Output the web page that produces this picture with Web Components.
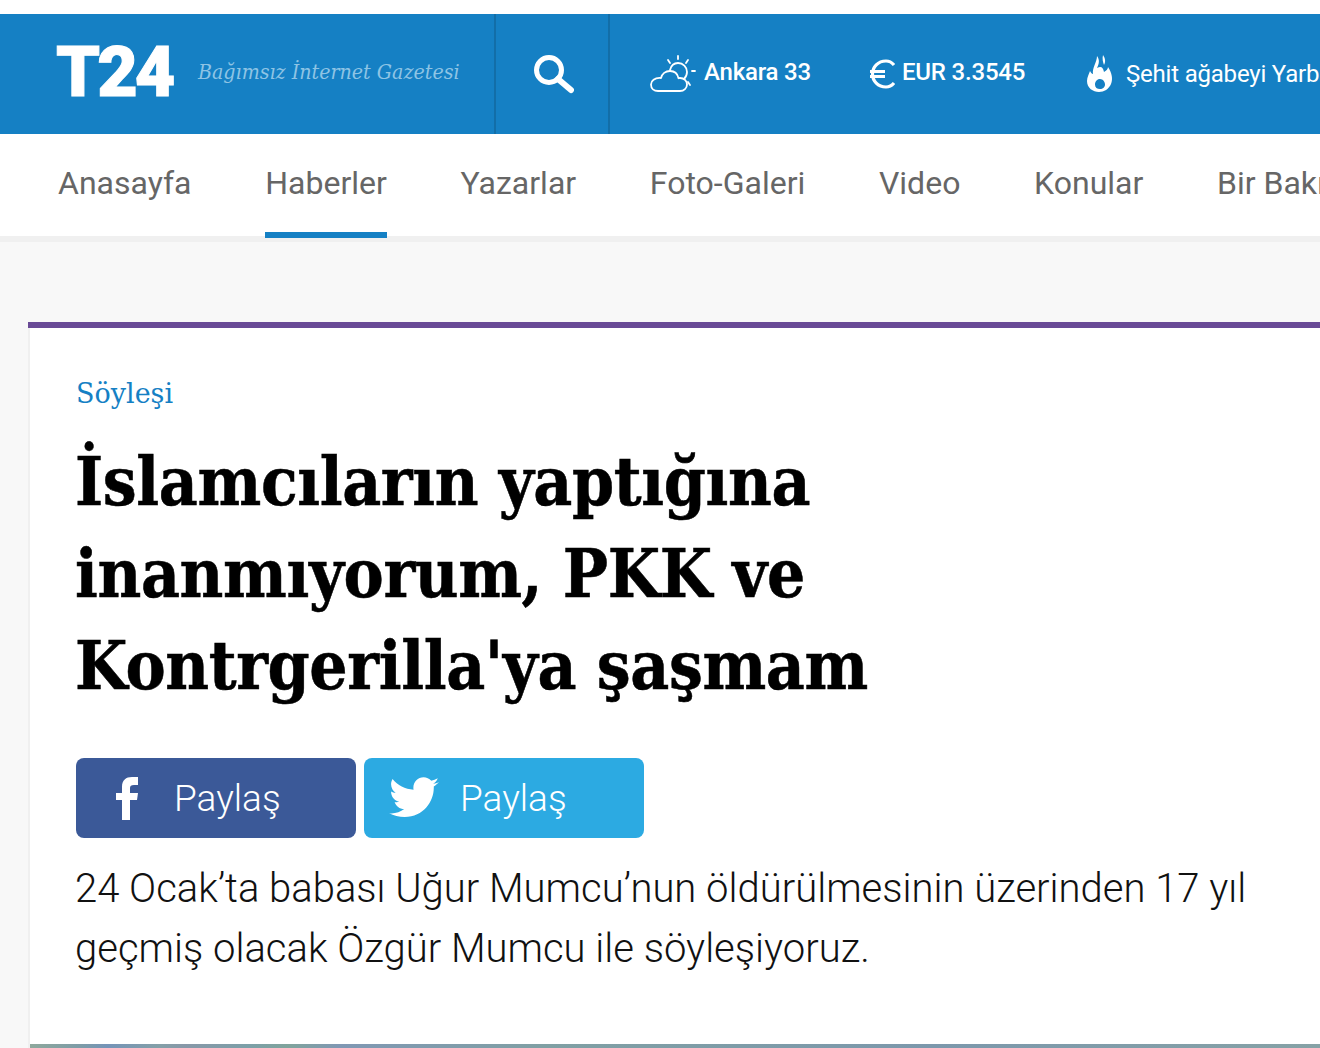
<!DOCTYPE html>
<html lang="tr">
<head>
<meta charset="utf-8">
<title>T24</title>
<style>
    html, body { margin: 0; padding: 0; height: 1048px; overflow: hidden; background: #f8f8f8; font-family: Roboto, sans-serif; }
</style>
</head>
<body>
<t24-header>
    <t24-ticker slot="tickers" style="margin-left:39px;width:220px;--label-pad:4px">
        <svg slot="icon" width="48" height="40" viewBox="0 0 48 40" fill="none" stroke="#fff" stroke-width="1.8" stroke-linecap="round" stroke-linejoin="round" style="margin-right:7px">
            <path d="M9 37h22c4 0 7-3 7-6.500s-3-6.500-7-6.500c-.6 0-1 0-1.500.2C28.500 19.500 25 17 21 17c-4.500 0-8 3-9 7-.5-.1-1-.1-1.500-.1C6 23.900 2 26.500 2 30.500S5 37 9 37z"/>
            <path d="M21 16c1-4 4-7 8-7 5 0 9 4 9 9 0 3-1 5-3 7"/>
            <path d="M29 2v3M19 6l2 3M39 6l-2 3M43 17h3M39 28l2 3"/>
        </svg>
        Ankara 33
    </t24-ticker>
    <t24-ticker slot="tickers" style="width:216px;--label-pad:4px">
        <svg slot="icon" width="26" height="30" viewBox="0 0 26 30" fill="none" stroke="#fff" stroke-width="3.200" style="margin-right:7px">
            <path d="M25 6C22.500 3 20 2 17 2 9 2 3.500 8 3.500 15S9 28 17 28c3 0 5.500-1 8-4"/>
            <path d="M1 12.500h15M1 17.500h15"/>
        </svg>
        EUR 3.3545
    </t24-ticker>
    <t24-ticker slot="tickers" style="white-space:nowrap;font-weight:400">
        <svg slot="icon" width="30" height="42" viewBox="0 0 30 42" style="margin-right:11px">
            <path fill="#fff" fill-rule="evenodd" d="M12 3c3 4 2 8 0 12 4-2 6-1 7 4 2-1 4-3 4-5 4 6 5 12 3 17-2 5-7 8-12 8-6 0-12-4-12-11 0-4 2-7 3-10 1 2 2 3 3 3-1-6 4-12 4-18zM15 26c-3 0-5 2.500-5 5.500s2 4.500 5 4.500 5-2 5-4.500-2-5.500-5-5.500z"/>
            <path fill="#fff" d="M18 2c2 3 3 6 1 10-1-3-2-6-1-10z"/>
        </svg>
        Şehit ağabeyi Yarbay
    </t24-ticker>
</t24-header>
<t24-nav>
    <t24-nav-item>Anasayfa</t24-nav-item>
    <t24-nav-item active>Haberler</t24-nav-item>
    <t24-nav-item>Yazarlar</t24-nav-item>
    <t24-nav-item>Foto-Galeri</t24-nav-item>
    <t24-nav-item>Video</t24-nav-item>
    <t24-nav-item>Konular</t24-nav-item>
    <t24-nav-item>Bir Bakışta</t24-nav-item>
</t24-nav>
<t24-article>
    <span slot="category">Söyleşi</span>
    <span slot="title">İslamcıların yaptığına inanmıyorum, PKK ve Kontrgerilla'ya şaşmam</span>
    <t24-share slot="share" kind="fb">
        <svg slot="icon" width="24" height="46" viewBox="0 0 24 46"><path fill="#fff" d="M7 45V25H1v-7h6v-6C7 5 11 2 17 2h6v8h-4c-3 0-4 1-4 3v5h8l-1 7h-7v20z"/></svg>
        Paylaş
    </t24-share>
    <t24-share slot="share" kind="tw">
        <svg slot="icon" width="50" height="42" viewBox="0 0 24 20"><path fill="#fff" d="M24 2.400c-.9.400-1.800.7-2.800.8 1-.6 1.800-1.600 2.200-2.700-1 .6-2 1-3.100 1.200C19.300.7 18 0 16.600 0c-2.700 0-4.900 2.200-4.900 4.900 0 .4 0 .8.100 1.100C7.700 5.800 4.100 3.800 1.700.9c-.4.700-.7 1.600-.7 2.500 0 1.700.9 3.200 2.200 4.100-.8 0-1.600-.2-2.200-.6v.1c0 2.400 1.700 4.400 3.900 4.800-.4.100-.8.200-1.300.2-.3 0-.6 0-.9-.1.6 2 2.400 3.400 4.600 3.400-1.700 1.300-3.800 2.100-6.100 2.100-.4 0-.8 0-1.200-.1C2.200 18.300 4.800 19.100 7.500 19.100c9.100 0 14-7.500 14-14v-.6c1-.7 1.800-1.600 2.500-2.100z"/></svg>
        Paylaş
    </t24-share>
    <span slot="summary">24 Ocak’ta babası Uğur Mumcu’nun öldürülmesinin üzerinden 17 yıl geçmiş olacak Özgür Mumcu ile söyleşiyoruz.</span>
</t24-article>

<script>
class T24Header extends HTMLElement {
    constructor() {
        super();
        this.attachShadow({ mode: "open" }).innerHTML = `
        <style>
            :host { display: flex; height: 120px; border-top: 14px solid #fff; background: #1580c4; color: #fff; overflow: hidden; }
            .brand { display: flex; align-items: center; width: 494px; box-sizing: border-box; padding-left: 56px; flex: none; }
            .logo { font: 900 70px/1 Roboto, sans-serif; letter-spacing: -3px; -webkit-text-stroke: 1px #fff; width: 142px; flex: none; padding-bottom: 5px; }
            .tag { font: italic 400 21.200px "DejaVu Serif Condensed", "DejaVu Serif", serif; font-stretch: condensed; color: #8ec4e4; white-space: nowrap; padding-bottom: 5px; }
            .search { width: 116px; flex: none; display: flex; align-items: center; justify-content: center; border-left: 2px solid #126ea8; border-right: 2px solid #126ea8; box-sizing: border-box; }
            .tickers { display: flex; align-items: center; flex: 1; }
        </style>
        <div class="brand"><div class="logo">T24</div><div class="tag">Bağımsız İnternet Gazetesi</div></div>
        <div class="search">
            <svg width="44" height="44" viewBox="0 0 44 44" fill="none" stroke="#fff" stroke-linecap="round">
                <circle cx="19" cy="18" r="12.500" stroke-width="5"/>
                <path d="M28 27l13 11" stroke-width="6"/>
            </svg>
        </div>
        <div class="tickers"><slot name="tickers"></slot></div>`;
    }
}

class T24Ticker extends HTMLElement {
    constructor() {
        super();
        this.attachShadow({ mode: "open" }).innerHTML = `
        <style>
            :host { display: flex; align-items: center; flex: none; color: #fff; font: 500 24px Roboto, sans-serif; }
            .label { padding-bottom: var(--label-pad, 0); letter-spacing: -0.2px; }
        </style>
        <slot name="icon"></slot><span class="label"><slot></slot></span>`;
    }
}

class T24Nav extends HTMLElement {
    constructor() {
        super();
        this.attachShadow({ mode: "open" }).innerHTML = `
        <style>
            :host { display: flex; height: 102px; gap: 73.7px; padding-left: 58px; background: #fff; border-bottom: 6px solid #f0f0f0; }
        </style>
        <slot></slot>`;
    }
}

class T24NavItem extends HTMLElement {
    constructor() {
        super();
        this.attachShadow({ mode: "open" }).innerHTML = `
        <style>
            :host { display: block; flex: none; position: relative; height: 104px; box-sizing: border-box; padding-top: 28px; font: 400 32px/42px Roboto, sans-serif; color: #666; white-space: nowrap; }
            :host([active])::after { content: ""; position: absolute; left: 0; right: 0; top: 98px; height: 6px; background: #1580c4; }
        </style>
        <slot></slot>`;
    }
}

class T24Article extends HTMLElement {
    constructor() {
        super();
        this.attachShadow({ mode: "open" }).innerHTML = `
        <style>
            :host { display: block; margin: 80px 0 0 28px; box-sizing: border-box; height: 726px; border-top: 6px solid #694a96; }
            .body { box-sizing: border-box; height: 720px; border-left: 2px solid #f0f0f0; background: #fff; padding: 48px 0 0 46px; position: relative; }
            .cat { font: 400 27px/36px "DejaVu Serif", serif; color: #1580c4; }
            h1 { margin: 24px 0 0 -1px; width: 860px; font: 700 67px/92px "DejaVu Serif Condensed", "DejaVu Serif", serif; font-stretch: condensed; letter-spacing: -0.4px; -webkit-text-stroke: 0.5px #000; color: #000; }
            .share { display: flex; gap: 8px; margin-top: 46px; }
            p { margin: 21px 0 0 -1px; width: 1190px; font: 300 40px/60px Roboto, sans-serif; color: #111; }
            .strip { position: absolute; left: 0; right: 0; bottom: 0; height: 4px; background: linear-gradient(90deg, #8ea89c, #7d9ca8 4%, #7594b8 6%, #84a0a8 10%, #8898a8 12%, #7ca0a8 17%, #80a49c 20%, #8098b4 24%, #80a0a4 40%, #7c98ac 70%, #86a2a6); }
        </style>
        <div class="body">
            <div class="cat"><slot name="category"></slot></div>
            <h1><slot name="title"></slot></h1>
            <div class="share"><slot name="share"></slot></div>
            <p><slot name="summary"></slot></p>
            <div class="strip"></div>
        </div>`;
    }
}

class T24Share extends HTMLElement {
    constructor() {
        super();
        this.attachShadow({ mode: "open" }).innerHTML = `
        <style>
            :host { display: flex; align-items: center; width: 280px; height: 80px; box-sizing: border-box; border-radius: 8px; color: #fff; font: 300 37px Roboto, sans-serif; }
            :host([kind="fb"]) { background: #3b5998; padding-left: 39px; gap: 35px; }
            :host([kind="tw"]) { background: #2caae2; padding-left: 25px; gap: 21px; }
        </style>
        <slot name="icon"></slot><slot></slot>`;
    }
}

customElements.define('t24-header', T24Header);
customElements.define('t24-ticker', T24Ticker);
customElements.define('t24-nav', T24Nav);
customElements.define('t24-nav-item', T24NavItem);
customElements.define('t24-article', T24Article);
customElements.define('t24-share', T24Share);
</script>
</body>
</html>
